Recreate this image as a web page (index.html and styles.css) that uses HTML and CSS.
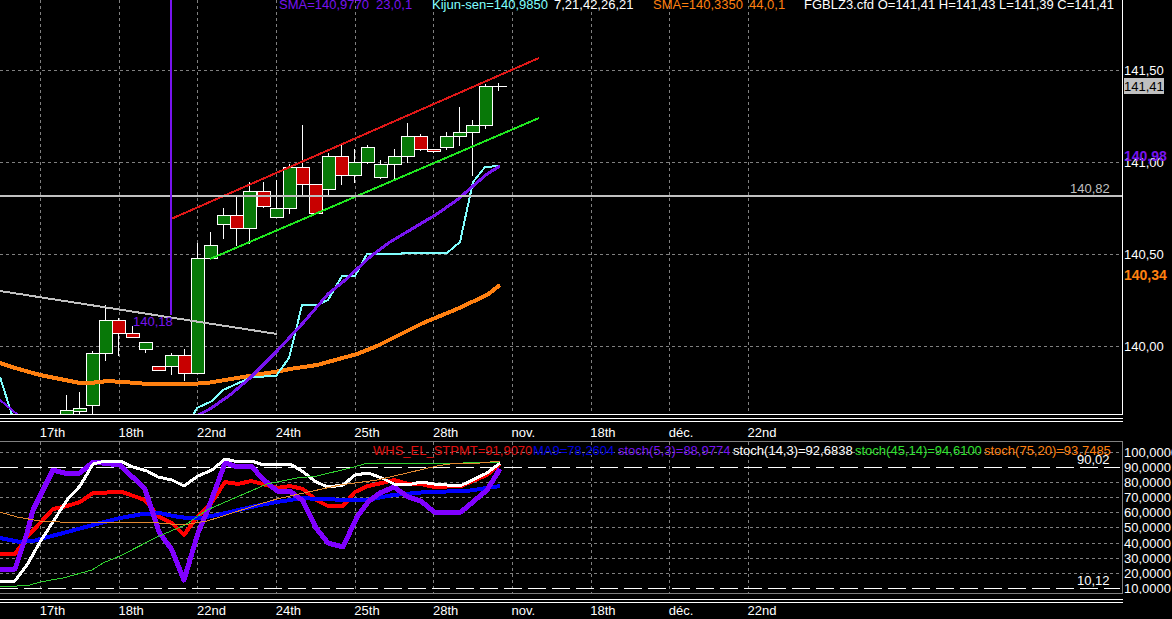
FILE: index.html
```html
<!DOCTYPE html>
<html lang="fr">
<head>
  <meta charset="UTF-8">
  <meta name="viewport" content="width=device-width, initial-scale=1.0">
  <title>FGBLZ3.cfd</title>
  <link rel="stylesheet" href="styles.css">
</head>
<body>
  <main class="workspace">

    <!-- Prix -->
    <section class="panel">
      <svg class="plot" viewBox="0 0 1123 415" role="img" aria-label="FGBLZ3.cfd">
        <g class="grid" id="priceGrid"></g>
        <g class="candles" id="candles"></g>
        <g id="priceLines"></g>
        <path class="level" d="M0 196H1122"></path>
        <path class="marker" d="M171 0V315"></path>
        <path class="frame" d="M0 414.5H1122.5V0"></path>
        <text class="violet" x="133" y="326">140,18</text>
        <text class="silver" x="1070" y="193">140,82</text>
        <text class="violet" x="279" y="9">SMA=140,9770</text>
        <text class="violet" x="376" y="9">23,0,1</text>
        <text class="cyan" x="432" y="9">Kijun-sen=140,9850</text>
        <text x="554" y="9">7,21,42,26,21</text>
        <text class="orange" x="653" y="9">SMA=140,3350</text>
        <text class="orange" x="749" y="9">44,0,1</text>
        <text x="804" y="9">FGBLZ3.cfd O=141,41 H=141,43 L=141,39 C=141,41</text>
      </svg>
      <svg class="axis" viewBox="1123 0 49 415">
        <text x="1124" y="75">141,50</text>
        <rect class="last" x="1124" y="78" width="40" height="16"></rect>
        <text class="black" x="1124" y="91">141,41</text>
        <text x="1124" y="167">141,00</text>
        <text class="violet tag" x="1124" y="161">140,98</text>
        <text x="1124" y="259">140,50</text>
        <text class="orange tag" x="1124" y="280">140,34</text>
        <text x="1124" y="351">140,00</text>
      </svg>
    </section>

    <div class="timeline">
      <ol class="dates">
        <li>17th</li><li>18th</li><li>22nd</li><li>24th</li><li>25th</li>
        <li>28th</li><li>nov.</li><li>18th</li><li>déc.</li><li>22nd</li>
      </ol>
    </div>

    <!-- Stochastiques -->
    <section class="panel">
      <svg class="plot" viewBox="0 441 1123 153" role="img" aria-label="Stochastiques">
        <g class="grid" id="stochGrid"></g>
        <path class="bound" d="M0 467.5H1120M0 588.5H1120"></path>
        <g id="stochLines"></g>
        <path class="frame dim" d="M0 441.5H1122.5V593.5H0"></path>
        <text class="red" x="373" y="455">WHS_EL_STPMT=91,9070</text>
        <text class="blue" x="533" y="455">MA9=78,2604</text>
        <text class="violet" x="618" y="455">stoch(5,3)=88,9774</text>
        <text x="733" y="455">stoch(14,3)=92,6838</text>
        <text class="green" x="855" y="455">stoch(45,14)=94,6100</text>
        <text class="orange" x="984" y="455">stoch(75,20)=93,7485</text>
        <text x="1077" y="464">90,02</text>
        <text x="1077" y="585">10,12</text>
      </svg>
      <svg class="axis" viewBox="1123 441 49 153">
        <text x="1124" y="457">100,0000</text>
        <text x="1124" y="472">90,0000</text>
        <text x="1124" y="487">80,0000</text>
        <text x="1124" y="502">70,0000</text>
        <text x="1124" y="517">60,0000</text>
        <text x="1124" y="532">50,0000</text>
        <text x="1124" y="548">40,0000</text>
        <text x="1124" y="563">30,0000</text>
        <text x="1124" y="578">20,0000</text>
        <text x="1124" y="593">10,0000</text>
      </svg>
    </section>

    <div class="timeline last-timeline">
      <ol class="dates">
        <li>17th</li><li>18th</li><li>22nd</li><li>24th</li><li>25th</li>
        <li>28th</li><li>nov.</li><li>18th</li><li>déc.</li><li>22nd</li>
      </ol>
    </div>
  </main>

  <script src="chart.js"></script>
</body>
</html>
```
FILE: styles.css
```css
body {
  margin: 0;
  background: #000;
  color: #fff;
  font: 13px/16px "Liberation Sans", Arial, sans-serif;
  overflow-x: hidden;
}

.panel {
  display: grid;
  grid-template-columns: 1123fr 49fr;
}

.plot,
.axis {
  display: block;
  width: 100%;
  overflow: hidden;
}

text {
  fill: #fff;
  font-size: 13px;
}

text.tag {
  font-size: 14px;
  font-weight: bold;
}

text.violet { fill: #7814f0; }
text.cyan { fill: #80ffff; }
text.orange { fill: #ff8010; }
text.silver { fill: #c0c0c0; }
text.red { fill: #e01010; }
text.blue { fill: #0000e0; }
text.green { fill: #30e030; }
text.black { fill: #000; }

.last { fill: #c0c0c0; }

path,
polyline {
  fill: none;
  shape-rendering: crispEdges;
}

.grid path {
  stroke: #808080;
  stroke-dasharray: 3 3;
}

.frame { stroke: #fff; }
.frame.dim { stroke: #808080; }

.level {
  stroke: #c0c0c0;
  stroke-width: 2;
}

.marker {
  stroke: #7814f0;
  stroke-width: 2;
}

.bound {
  stroke: #fff;
  stroke-dasharray: 18 6;
}

/* Bougies */
.candles rect {
  stroke: #fff;
  shape-rendering: crispEdges;
}

.candles path { stroke: #fff; }
.up { fill: #087808; }
.down { fill: #c80000; }

/* Echelle de temps */
.timeline {
  margin-top: 3px;
}

.timeline::before {
  content: "";
  display: block;
  width: calc(100% * 1123 / 1172);
  height: 2px;
  border-top: 1px solid #fff;
  border-bottom: 1px solid #fff;
}

.dates {
  display: flex;
  width: calc(100% * 1123 / 1172);
  box-sizing: border-box;
  margin: 0;
  padding: 3px 0 0 3.4%;
  list-style: none;
}

.dates li {
  width: 7.26%;
}

.last-timeline {
  margin-top: 5px;
}

.last-timeline .dates {
  padding-top: 0;
}
```
FILE: chart.js
```js
const NS = 'http://www.w3.org/2000/svg';

function add(parent, tag, attrs) {
  const el = document.createElementNS(NS, tag);
  for (const key in attrs) el.setAttribute(key, attrs[key]);
  document.getElementById(parent).appendChild(el);
}

const days = [40, 119, 197, 276, 355, 433, 512, 591, 669, 748];

function drawGrid(id, rows, top, bottom) {
  rows.forEach(y => add(id, 'path', { d: `M0 ${y + 0.5}H1119` }));
  days.forEach(x => add(id, 'path', { d: `M${x + 0.5} ${top}V${bottom}` }));
}

drawGrid('priceGrid', [70, 162, 254, 346], 0, 414);
drawGrid('stochGrid', [452, 482, 497, 512, 527, 543, 558, 573], 442, 593);

// [sens, haut du corps, bas du corps, plus haut, plus bas]
const candles = [
  ['up', 410, 416, 395, 416], ['up', 408, 411, 392, 414], ['up', 353, 405, 351, 414],
  ['up', 320, 353, 305, 361], ['down', 320, 333, 318, 356], ['down', 333, 337, 326, 338],
  ['up', 342, 349, 342, 353], ['down', 366, 370, 366, 370], ['up', 355, 366, 353, 375],
  ['down', 355, 373, 349, 381], ['up', 258, 373, 243, 373], ['up', 245, 258, 232, 258],
  ['up', 215, 224, 208, 239], ['down', 215, 228, 197, 246], ['up', 191, 228, 182, 244],
  ['down', 191, 206, 182, 208], ['up', 208, 217, 180, 217], ['up', 167, 208, 164, 214],
  ['down', 167, 184, 125, 197], ['down', 184, 213, 184, 213], ['up', 156, 189, 153, 195],
  ['down', 156, 175, 145, 185], ['up', 162, 175, 149, 183], ['up', 147, 162, 145, 164],
  ['up', 164, 177, 160, 179], ['up', 156, 164, 149, 179], ['up', 136, 156, 123, 163],
  ['down', 136, 149, 134, 151], ['down', 149, 151, 149, 153], ['up', 136, 147, 132, 150],
  ['up', 132, 136, 107, 146], ['up', 125, 132, 120, 176], ['up', 86, 125, 84, 129],
  ['up', 86, 86, 83, 91]
];

candles.forEach(([dir, top, bottom, high, low], i) => {
  const x = Math.round(60 + 13.1 * i) + 0.5;
  add('candles', 'path', { d: `M${x + 6} ${high}V${low}` });
  if (top === bottom) {
    add('candles', 'path', { d: `M${x} ${top + 0.5}h14` });
  } else {
    add('candles', 'rect', { class: dir, x: x, y: top + 0.5, width: 13, height: bottom - top });
  }
});

function line(id, color, width, points) {
  add(id, 'polyline', { points: points, stroke: color, 'stroke-width': width, 'stroke-linejoin': 'round' });
}

line('priceLines', '#ff8010', 4, '0,363 15,368 40,375 60,379 80,383 90,383 108,381 137,383 147,384 190,384 207,383 243,377 280,371 290,369 317,365 357,354 377,346 423,323 457,309 487,295 500,285');
line('priceLines', '#80ffff', 2, '0,377 12,415');
line('priceLines', '#80ffff', 2, '193,415 197,408 212,401 223,390 243,381 252,377 276,376 289,358 296,330 302,305 317,305 328,300 342,276 355,276 367,254 401,254 402,253 447,253 460,242 473,182 485,167 500,166');
line('priceLines', '#7814f0', 2, '0,400 18,415');
line('priceLines', '#7814f0', 3, '198,415 210,409 230,395 250,378 277,351 303,323 328,294 343,282 370,257 390,242 437,214 457,200 473,186 487,174 500,166');
line('priceLines', '#c0c0c0', 2, '0,291 277,334');
line('priceLines', '#e01818', 2, '171,219 539,58');
line('priceLines', '#20e820', 2, '210,259 539,118');

line('stochLines', '#ff0000', 4, '0,554 15,554 27,537 53,509 67,506 80,502 93,493 122,492 145,500 159,517 172,523 184,535 197,517 210,505 225,482 238,484 251,481 263,484 277,488 290,486 303,489 316,500 328,506 343,506 355,492 368,486 382,483 394,480 408,484 421,484 434,487 461,486 487,475 500,464');
line('stochLines', '#0000ff', 4, '0,538 20,542 33,541 67,532 93,525 120,518 143,514 160,513 173,516 187,518 200,518 217,515 260,505 277,502 303,498 316,499 353,500 367,500 393,495 427,492 467,491 487,488 500,486');
line('stochLines', '#8000ff', 5, '0,570 15,569 27,533 33,510 53,470 68,474 80,473 93,462 120,465 145,489 159,532 172,550 184,580 198,533 207,512 225,463 238,467 251,466 263,479 277,491 290,491 303,501 316,528 328,543 343,547 357,517 368,502 380,493 394,487 408,497 421,501 434,512 461,512 487,490 500,469');
line('stochLines', '#ffffff', 3, '0,581 15,581 27,565 40,542 67,500 80,486 93,464 105,461 120,461 133,467 147,471 158,477 172,480 184,486 198,476 212,470 225,459 238,462 252,461 263,465 290,464 302,471 316,482 328,487 343,485 355,475 368,473 382,478 394,484 408,485 421,482 434,484 460,486 487,473 500,463');
line('stochLines', '#30d030', 1, '0,587 17,586 30,585 40,582 63,578 92,570 103,563 120,556 157,537 185,525 207,510 230,500 267,484 297,478 317,476 350,468 368,463 463,463 500,462');
line('stochLines', '#e08830', 1, '0,512 17,517 40,521 60,522 147,522 183,525 207,521 220,517 260,504 277,499 290,496 313,491 340,485 377,480 437,466 450,464 480,463 500,461');
```
